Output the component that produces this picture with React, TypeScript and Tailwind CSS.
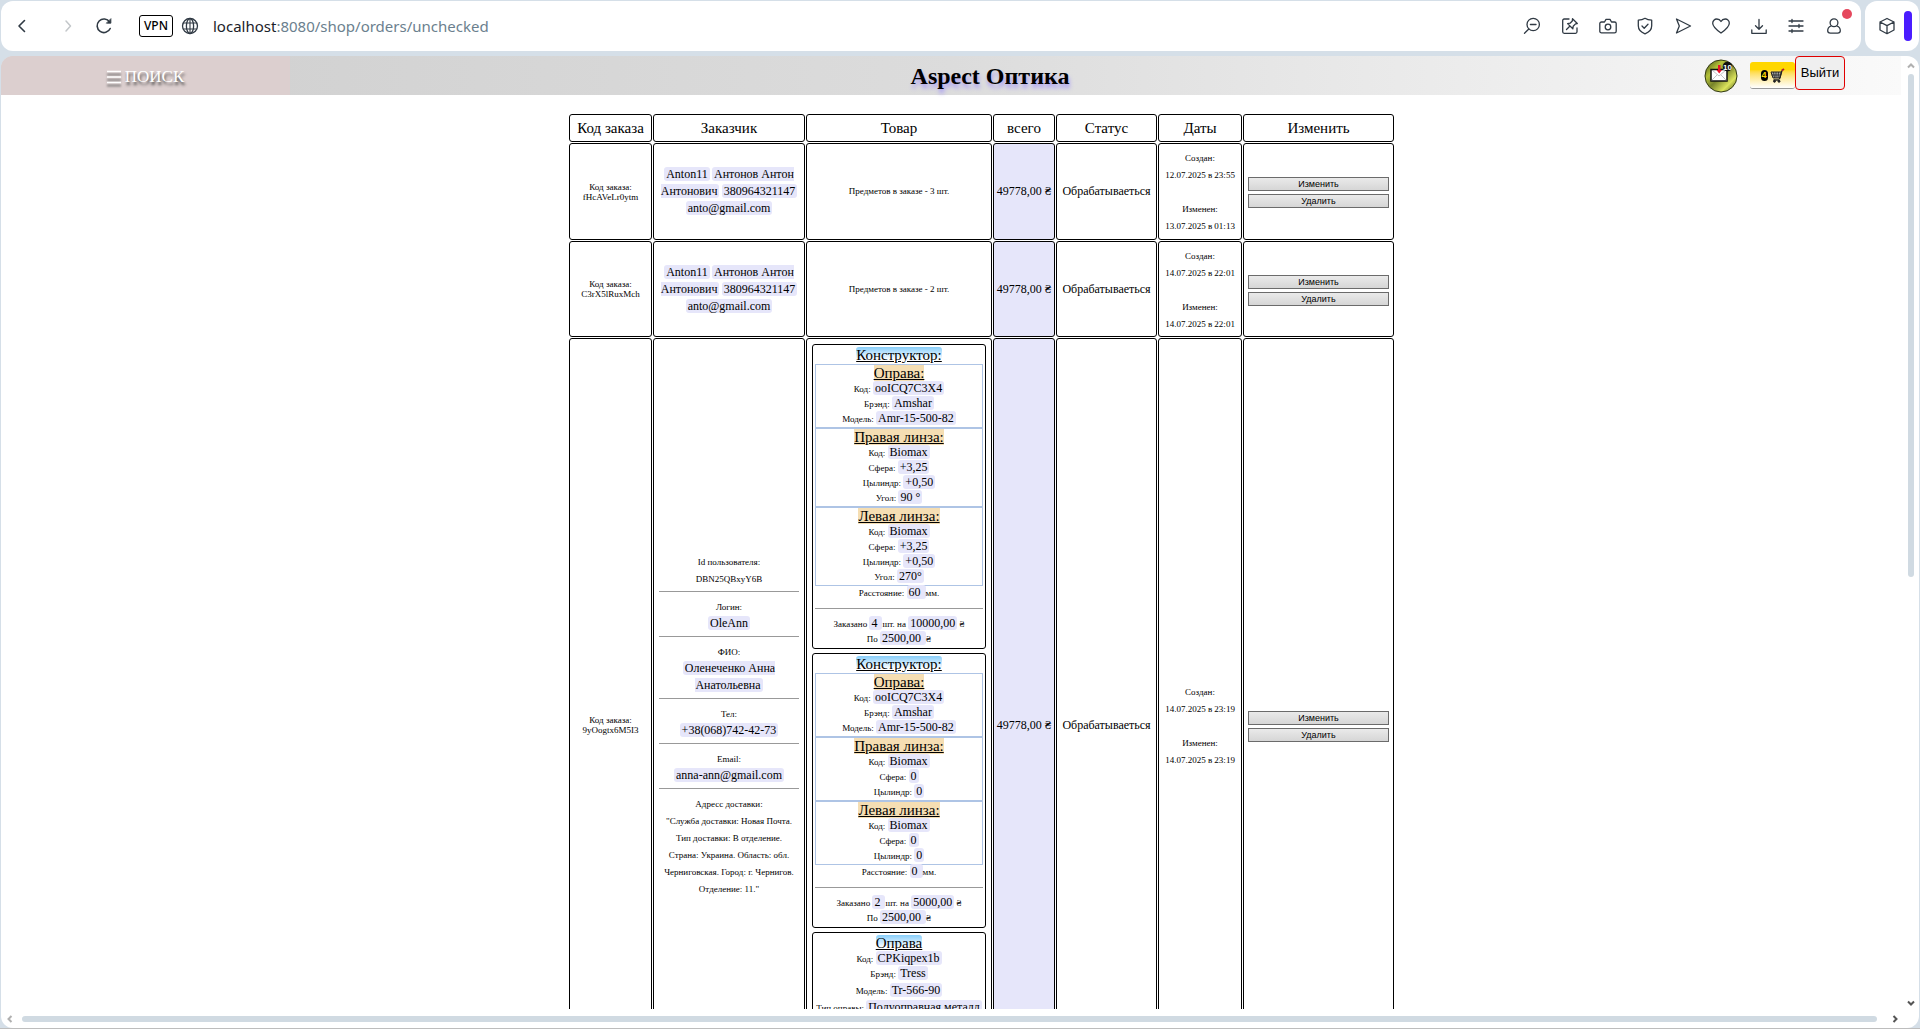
import type { ReactNode } from "react";

type Field = { label: string; value: string };

const frame: Field[] = [
  { label: "Код:", value: "ooICQ7C3X4" },
  { label: "Брэнд:", value: "Amshar" },
  { label: "Модель:", value: "Amr-15-500-82" },
];

function Icon({ children }: { children: ReactNode }) {
  return (
    <svg
      viewBox="0 0 18 18"
      className="block h-[18px] w-[18px] overflow-visible"
      fill="none"
      stroke="#303a44"
      strokeWidth="1.3"
      strokeLinecap="round"
      strokeLinejoin="round"
      aria-hidden="true"
    >
      {children}
    </svg>
  );
}

function ToolButton({ label, children }: { label: string; children: ReactNode }) {
  return (
    <button type="button" aria-label={label} className="relative block">
      <Icon>{children}</Icon>
    </button>
  );
}

function BrowserBar() {
  return (
    <div className="flex gap-1 px-px pt-px">
      <div className="flex h-[50px] flex-1 items-center rounded-xl bg-white pr-[18px] pl-[13px] font-['Noto_Sans']">
        <ToolButton label="Назад">
          <path d="M10.5 3.5 5 9l5.500 5.500" strokeWidth="1.6" />
        </ToolButton>
        <button type="button" aria-label="Вперёд" className="ml-[26px] block">
          <svg viewBox="0 0 18 18" className="block h-[18px] w-[18px]" fill="none" stroke="#c3c7ca" strokeWidth="1.5" strokeLinecap="round" strokeLinejoin="round">
            <path d="M8 4l4.500 5L8 14" />
          </svg>
        </button>
        <span className="ml-[19px]">
          <ToolButton label="Обновить">
            <path d="M15.200 11.500A6.800 6.800 0 1 1 14.600 5" strokeWidth="1.600" />
            <path d="M15.900 2v4.200h-4.200z" fill="#303a44" strokeWidth="0.800" />
          </ToolButton>
        </span>
        <button type="button" className="ml-[26px] flex h-[22px] w-[34px] items-center justify-center rounded-[3px] border border-black text-[12px] font-medium text-black">
          VPN
        </button>
        <span className="ml-2">
          <ToolButton label="Сведения о сайте">
            <circle cx="9" cy="9" r="7.500" />
            <ellipse cx="9" cy="9" rx="3.600" ry="7.500" />
            <path d="M9 1.500v15M2.400 6h13.200M2.400 12h13.200" strokeWidth="1.100" />
          </ToolButton>
        </span>
        <div className="ml-3.5 flex-1 text-[15px] text-[#6b7f8e]">
          <span className="text-[#1b2229]">localhost</span>:8080/shop/orders/unchecked
        </div>
        <div className="flex w-80 justify-between">
          <ToolButton label="Масштаб">
            <circle cx="10.200" cy="7.500" r="6.200" />
            <path d="M5.800 12 1.500 16.300M7.400 7.500h5.600" />
          </ToolButton>
          <ToolButton label="Закладка">
            <path d="M8 2H3.200C2.300 2 1.700 2.600 1.700 3.500v11.300c0 .9.6 1.500 1.500 1.500h11.300c.9 0 1.500-.6 1.500-1.500V11" />
            <path d="M5.500 12.500 9 9M11.500 1.700l4.800 4.800-1.800.4-2.300 2.400-.4 2.500-5.200-5.200 2.500-.4L11.300 4z" />
          </ToolButton>
          <ToolButton label="Снимок">
            <path d="M2.500 5h3l1.500-2.600h4L12.500 5h3c1 0 1.700.7 1.700 1.600v7.600c0 .9-.7 1.600-1.700 1.600h-13c-1 0-1.700-.7-1.700-1.600V6.600C.8 5.700 1.500 5 2.500 5z" />
            <circle cx="9" cy="10" r="2.800" />
          </ToolButton>
          <ToolButton label="Защита">
            <path d="M9 1.300c2 1.400 4.300 1.900 6.700 1.900v5.600c0 3.600-2.400 6.400-6.700 8-4.300-1.600-6.700-4.400-6.700-8V3.200C4.700 3.200 7 2.700 9 1.300z" />
            <path d="M6 9l2.200 2.200L12 7.300" />
          </ToolButton>
          <ToolButton label="Отправить">
            <path d="M2.500 2 16.500 9l-14 7 2.800-7z" />
          </ToolButton>
          <ToolButton label="Избранное">
            <path d="M9 16C4.500 12.800.7 9.800.7 6.200.7 3.700 2.600 2 4.800 2 6.700 2 8.200 3 9 4.500 9.800 3 11.300 2 13.200 2c2.200 0 4.100 1.700 4.100 4.200C17.300 9.800 13.500 12.800 9 16z" />
          </ToolButton>
          <ToolButton label="Загрузки">
            <path d="M9 2.500V12M5.500 8.800 9 12.200l3.500-3.400M1.800 13v3.300h14.400V13" />
          </ToolButton>
          <ToolButton label="Настройки">
            <path d="M2 4h14M2 9h14M2 14h14M5 2.500v3M12 7.500v3M5 12.500v3" />
          </ToolButton>
          <button type="button" aria-label="Профиль" className="relative block">
            <Icon>
              <circle cx="9" cy="5.800" r="3.900" />
              <path d="M6 9c-2.200.8-3.300 2.500-3.300 4.700 0 1.600 1.200 2.400 2.700 2.400h7.200c1.500 0 2.700-.8 2.700-2.400C15.300 11.500 14.200 9.800 12 9" />
            </Icon>
            <span className="absolute -top-[8px] -right-[9px] h-2.5 w-2.5 rounded-full bg-[#e5485d]" />
          </button>
        </div>
      </div>
      <div className="flex h-[50px] w-[54px] items-center justify-end gap-2 rounded-xl bg-white pr-[7px]">
        <ToolButton label="Расширения">
          <path d="M9 1.500 16 5v8l-7 3.700L2 13V5zM2 5l7 3.600L16 5M9 8.600v8" />
        </ToolButton>
        <span className="h-[30px] w-2 rounded bg-[#4a1cff]" />
      </div>
    </div>
  );
}

function SiteHeader() {
  return (
    <header className="mr-[18px] flex h-[39px] bg-linear-to-r from-[#cecece] via-[#dcdcdc] to-[#fafafa]">
      <button
        type="button"
        className="flex w-[289px] items-center justify-center gap-1 bg-[#dccfcf] pt-0.5 text-[17px] text-white [text-shadow:1px_3px_3px_#444]"
      >
        <svg viewBox="0 0 14 14" className="h-3.5 w-3.5 drop-shadow-[0_3px_1px_#666]" stroke="#fff" strokeWidth="1.600" aria-hidden="true">
          <path d="M0 1.500h14M0 7h14M0 12.500h14" />
        </svg>
        ПОИСК
      </button>
      <h1 className="flex flex-1 items-center justify-center text-[24px] leading-6 font-bold [text-shadow:1px_4px_4px_#a79bf5]">
        Aspect Оптика
      </h1>
      <div className="flex w-[211px] items-start pl-[14px]">
        <button type="button" aria-label="Сообщения: 10" className="mt-[3px] block">
          <svg viewBox="0 0 34 34" className="block h-[34px] w-[34px]" fontFamily="Liberation Sans">
            <defs>
              <linearGradient id="olive" x1="0" y1="0" x2="1" y2="1">
                <stop offset="0" stopColor="#3d4a10" />
                <stop offset="0.300" stopColor="#b5c23a" />
                <stop offset="0.500" stopColor="#77832a" />
                <stop offset="0.750" stopColor="#dbe45c" />
                <stop offset="1" stopColor="#3c4512" />
              </linearGradient>
            </defs>
            <circle cx="17" cy="17" r="16" fill="url(#olive)" stroke="#333b16" />
            <rect x="7" y="10.500" width="16" height="11.500" fill="#fff" stroke="#111" strokeWidth="1.500" />
            <path d="M7.500 21.500 13 16M22.500 21.500 17 16M8 11l7 6 7-6" stroke="#999" strokeWidth="0.600" fill="none" />
            <path d="M14 6h2.500v5H18l-2.800 3.500L12.500 11H14z" fill="#e8132b" />
            <circle cx="23.500" cy="7.500" r="4.800" fill="#111" />
            <text x="23.500" y="10.500" fontSize="8" fontWeight="700" fill="#fff" textAnchor="middle">10</text>
          </svg>
        </button>
        <button
          type="button"
          aria-label="Корзина: 4"
          className="mt-1.5 ml-3 flex h-[27px] w-[45px] items-center justify-center gap-px rounded-[3px] border-b border-[#999] bg-linear-to-b from-[#ffd700] from-30% to-white"
        >
          <span className="flex h-[11px] w-[7px] items-center justify-center rounded-full bg-black font-['Liberation_Sans'] text-[9px] leading-[11px] font-bold text-[#ffd700]">4</span>
          <svg viewBox="0 0 16 15" className="h-[15px] w-4" fill="none" stroke="#222" aria-hidden="true">
            <path d="M2 4h10.500l-1.500 6H4z" fill="#aaa" strokeWidth="1" />
            <path d="M4.500 4l1 6M7 4v6M9.500 4l-.5 6M2.500 7h9" strokeWidth="0.800" />
            <path d="M10.500 12H4.500M10.500 11 13 2.500" strokeWidth="1.300" />
            <path d="M12.800 2.500 15 1" stroke="#b3202a" strokeWidth="2" />
            <circle cx="5.500" cy="13.300" r="1" fill="#222" />
            <circle cx="10" cy="13.300" r="1" fill="#222" />
          </svg>
        </button>
        <button
          type="button"
          className="h-[34px] w-[50px] rounded-[4px] border border-[#e00000] bg-[#efefef] font-['Liberation_Sans'] text-[13px] text-black"
        >
          Выйти
        </button>
      </div>
    </header>
  );
}

function Chip({ children }: { children: ReactNode }) {
  return <span className="rounded-[3px] bg-[#e6e6fa] px-0.5 text-[12px] leading-none">{children}</span>;
}

function Rule() {
  return <hr className="mt-[3px] mb-[7px] border-t border-[#999]" />;
}

function Lines({ fields }: { fields: Field[] }) {
  return (
    <>
      {fields.map((f) => (
        <p key={f.label} className="whitespace-nowrap">
          {f.label} <Chip>{f.value}</Chip>
        </p>
      ))}
    </>
  );
}

function Part({ title, fields }: { title: string; fields: Field[] }) {
  return (
    <section className="border border-[#aec4e5]">
      <h3 className="text-[15px] leading-[17px]">
        <span className="bg-[#f5deb3] underline">{title}</span>
      </h3>
      <Lines fields={fields} />
    </section>
  );
}

function ProductCard({ title, children }: { title: string; children: ReactNode }) {
  return (
    <article className="overflow-hidden rounded-[3px] border border-black px-0.5 py-px leading-[15px]">
      <h2 className="text-[15px] leading-[18px]">
        <span className="rounded-[3px] bg-linear-to-b from-[#87cefa] to-white to-80% underline">{title}</span>
      </h2>
      {children}
    </article>
  );
}

function Constructor(props: { right: Field[]; left: Field[]; distance: string; count: string; sum: string }) {
  return (
    <ProductCard title="Конструктор:">
      <Part title="Оправа:" fields={frame} />
      <Part title="Правая линза:" fields={props.right} />
      <Part title="Левая линза:" fields={props.left} />
      <p>
        Расстояние: <Chip>{props.distance} </Chip>мм.
      </p>
      <hr className="mt-[7px] mb-2 border-t border-[#999]" />
      <p>
        Заказано <Chip>{props.count} </Chip>шт. на <Chip>{props.sum}</Chip> ₴
      </p>
      <p>
        По <Chip>2500,00 </Chip> ₴
      </p>
    </ProductCard>
  );
}

const lensA: Field[] = [
  { label: "Код:", value: "Biomax" },
  { label: "Сфера:", value: "+3,25" },
  { label: "Цылиндр:", value: "+0,50" },
];
const lensZero: Field[] = [
  { label: "Код:", value: "Biomax" },
  { label: "Сфера:", value: "0" },
  { label: "Цылиндр:", value: "0" },
];

function ShortCustomer() {
  return (
    <>
      <Chip>Anton11</Chip> <Chip>Антонов Антон Антонович</Chip> <Chip>380964321147</Chip> <Chip>anto@gmail.com</Chip>
    </>
  );
}

function FullCustomer() {
  return (
    <>
      <p>Id пользователя:</p>
      <p>DBN25QBxyY6B</p>
      <Rule />
      <p>Логин:</p>
      <p><Chip>OleAnn</Chip></p>
      <Rule />
      <p>ФИО:</p>
      <p className="px-5"><Chip>Оленеченко Анна Анатольевна</Chip></p>
      <Rule />
      <p>Тел:</p>
      <p><Chip>+38(068)742-42-73</Chip></p>
      <Rule />
      <p>Email:</p>
      <p><Chip>anna-ann@gmail.com</Chip></p>
      <Rule />
      <p>Адресс доставки:</p>
      <p className="px-1">"Служба доставки: Новая Почта. Тип доставки: В отделение. Страна: Украина. Область: обл. Черниговская. Город: г. Чернигов. Отделение: 11."</p>
    </>
  );
}

function FullProducts() {
  return (
    <div className="flex flex-col gap-1">
      <Constructor
        right={[...lensA, { label: "Угол:", value: "90 °" }]}
        left={[...lensA, { label: "Угол:", value: "270°" }]}
        distance="60"
        count="4"
        sum="10000,00"
      />
      <Constructor right={lensZero} left={lensZero} distance="0" count="2" sum="5000,00" />
      <ProductCard title="Оправа">
        <Lines fields={[{ label: "Код:", value: "CPKiqpex1b" }, { label: "Брэнд:", value: "Tress" }]} />
        <div className="pt-px leading-[17px]">
          <Lines fields={[{ label: "Модель:", value: "Tr-566-90" }, { label: "Тип оправы:", value: "Полуоправная металл" }]} />
        </div>
      </ProductCard>
    </div>
  );
}

function OrderRow(props: {
  code: string;
  customer: ReactNode;
  goods: ReactNode;
  created: string;
  changed: string;
  height: string;
  goodsAlign?: string;
}) {
  const cell = "rounded-[3px] border border-black p-[5px]";
  return (
    <tr className={props.height}>
      <td className={cell + " leading-[10px]"}>
        Код заказа:
        <br />
        {props.code}
      </td>
      <td className={cell + " pt-[7px]"}>{props.customer}</td>
      <td className={cell + " " + (props.goodsAlign ?? "align-middle")}>{props.goods}</td>
      <td className="rounded-[3px] border border-black bg-[#e6e6fa] text-[12px] whitespace-nowrap">49778,00 ₴</td>
      <td className="rounded-[3px] border border-black text-[12px]">Обрабатываеться</td>
      <td className="rounded-[3px] border border-black pt-0.5 whitespace-nowrap">
        <p>Создан:</p>
        <p>{props.created}</p>
        <p className="mt-[17px]">Изменен:</p>
        <p>{props.changed}</p>
      </td>
      <td className="rounded-[3px] border border-black px-1 pt-0.5">
        <div className="flex flex-col gap-[3px]">
          {["Изменить", "Удалить"].map((t) => (
            <button
              key={t}
              type="button"
              className="h-3.5 border border-[#6b6b6b] bg-linear-to-b from-[#eaeaea] to-[#d6d6d6] font-['Liberation_Sans'] text-[9px] leading-3 text-black"
            >
              {t}
            </button>
          ))}
        </div>
      </td>
    </tr>
  );
}

function OrdersTable() {
  const columns = [
    { title: "Код заказа", width: "w-[83px]" },
    { title: "Заказчик", width: "w-[152px]" },
    { title: "Товар", width: "w-[186px]" },
    { title: "всего", width: "w-[62px]" },
    { title: "Статус", width: "w-[101px]" },
    { title: "Даты", width: "w-[84px]" },
    { title: "Изменить", width: "w-[151px]" },
  ];
  return (
    <table className="mx-auto w-[827px] table-fixed border-separate border-spacing-px text-center text-[9px] leading-[17px]">
      <thead>
        <tr className="h-7 text-[15px]">
          {columns.map((c) => (
            <th key={c.title} className={c.width + " rounded-[3px] border border-black font-normal whitespace-nowrap"}>
              {c.title}
            </th>
          ))}
        </tr>
      </thead>
      <tbody>
        <OrderRow height="h-[97px]" code="fHcAVeLr0ytm" customer={<ShortCustomer />} goods="Предметов в заказе - 3 шт." created="12.07.2025 в 23:55" changed="13.07.2025 в 01:13" />
        <OrderRow height="h-24" code="C3rX5lRuxMch" customer={<ShortCustomer />} goods="Предметов в заказе - 2 шт." created="14.07.2025 в 22:01" changed="14.07.2025 в 22:01" />
        <OrderRow height="h-[774px]" goodsAlign="align-top" code="9yOogtx6M5I3" customer={<FullCustomer />} goods={<FullProducts />} created="14.07.2025 в 23:19" changed="14.07.2025 в 23:19" />
      </tbody>
    </table>
  );
}

function Arrow({ d, color }: { d: string; color: string }) {
  return (
    <svg viewBox="0 0 8 8" className="h-2 w-2 shrink-0" fill="none" stroke={color} strokeWidth="2" aria-hidden="true">
      <path d={d} />
    </svg>
  );
}

export default function App() {
  return (
    <div className="flex h-screen flex-col overflow-hidden border-b border-[#bdbdbd] bg-[#d5dfe8] font-['Liberation_Serif',serif] text-black">
      <BrowserBar />
      <div className="mx-px mt-[5px] flex min-h-0 flex-1 flex-col overflow-hidden rounded-xl bg-white">
        <div className="relative min-h-0 flex-1 overflow-hidden">
          <SiteHeader />
          <main className="pt-[18px] pl-[43px]">
            <OrdersTable />
          </main>
          <div className="absolute top-0 right-[4px] bottom-0 flex w-2 flex-col items-center pt-1.5 pb-0.5">
            <Arrow d="M1 5.500 4 2.500l3 3" color="#b0b0b0" />
            <div className="mt-1 h-[503px] w-1.5 rounded-full bg-[#d0dae2]" />
            <div className="flex-1" />
            <Arrow d="M1 2.500 4 5.500l3-3" color="#555" />
          </div>
        </div>
        <div className="flex h-[19px] items-center gap-2 pr-[20px] pl-[5px]">
          <Arrow d="M5.500 1 2.500 4l3 3" color="#b0b0b0" />
          <div className="mr-1.5 h-1.5 flex-1 rounded-full bg-[#d0dae2]" />
          <Arrow d="M2.500 1l3 3-3 3" color="#555" />
        </div>
      </div>
    </div>
  );
}
